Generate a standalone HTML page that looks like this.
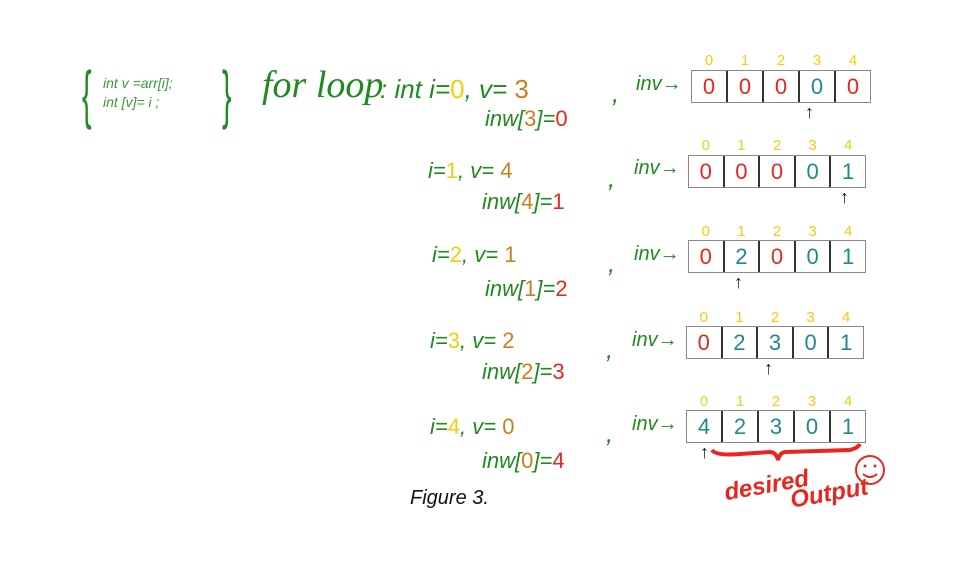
<!DOCTYPE html>
<html><head><meta charset="utf-8"><style>
body{margin:0;width:969px;height:585px;background:#fff;position:relative;overflow:hidden;font-family:"Liberation Sans",sans-serif}
.a{position:absolute;white-space:nowrap;line-height:1}
.g{color:#1f8a1f}.y{color:#f0cf10}.o{color:#c8801e}.r{color:#e8261e}.t{color:#1e8a8a}.k{color:#111}
.lab span{font-style:normal}
.arr{position:absolute;display:flex;border:1.5px solid #888;height:31px;background:#fff}
.arr div{flex:1;border-left:2px solid #333;display:flex;align-items:center;justify-content:center;font-size:22px}
.arr div:first-child{border-left:none}
.idx{position:absolute;display:flex;font-size:15px;color:#f0cf10}
.idx span{flex:1;text-align:center}
.lab{font-size:22px;font-style:italic}
</style></head><body>
<div class="a g" style="left:82px;top:62px;font-size:64px;transform:scaleX(.45);transform-origin:left">{</div>
<div class="a g" style="left:103px;top:76px;font-size:14px;font-style:italic;color:#3a9a3a">int v =arr[i];</div>
<div class="a g" style="left:103px;top:95px;font-size:14px;font-style:italic;color:#3a9a3a">int [v]= i ;</div>
<div class="a g" style="left:222px;top:62px;font-size:64px;transform:scaleX(.45);transform-origin:left">}</div>
<div class="a g" style="left:262px;top:66px;font-size:38px;font-style:italic;font-family:'Liberation Serif',serif">for loop</div>
<div class="a g lab" style="left:380px;top:76px;font-size:26px">: int i=<span class="y">0</span>, v= <span class="o">3</span></div>
<div class="a g lab" style="left:485px;top:108px">inw[<span class="o">3</span>]=<span class="r">0</span></div>

<div class="a g lab" style="left:428px;top:160px">i=<span class="y">1</span>, v= <span class="o">4</span></div>
<div class="a g lab" style="left:482px;top:191px">inw[<span class="o">4</span>]=<span class="r">1</span></div>
<div class="a g lab" style="left:432px;top:244px">i=<span class="y">2</span>, v= <span class="o">1</span></div>
<div class="a g lab" style="left:485px;top:278px">inw[<span class="o">1</span>]=<span class="r">2</span></div>
<div class="a g lab" style="left:430px;top:330px">i=<span class="y">3</span>, v= <span class="o">2</span></div>
<div class="a g lab" style="left:482px;top:361px">inw[<span class="o">2</span>]=<span class="r">3</span></div>
<div class="a g lab" style="left:430px;top:416px">i=<span class="y">4</span>, v= <span class="o">0</span></div>
<div class="a g lab" style="left:482px;top:450px">inw[<span class="o">0</span>]=<span class="r">4</span></div>

<div class="a g lab" style="left:612px;top:80px;font-size:26px">,</div>
<div class="a g lab" style="left:636px;top:74px;font-size:20px">inv→</div>
<div class="idx" style="left:691px;top:52px;width:180px"><span>0</span><span>1</span><span>2</span><span>3</span><span>4</span></div>
<div class="arr" style="left:691px;top:70px;width:178px"><div class="r">0</div><div class="r">0</div><div class="r">0</div><div class="t">0</div><div class="r">0</div></div>
<div class="a k" style="left:805px;top:103px;font-size:18px">↑</div>

<div class="a g lab" style="left:608px;top:165px;font-size:26px">,</div>
<div class="a g lab" style="left:634px;top:158px;font-size:20px">inv→</div>
<div class="idx" style="left:688px;top:137px;width:178px"><span>0</span><span>1</span><span>2</span><span>3</span><span>4</span></div>
<div class="arr" style="left:688px;top:155px;width:176px"><div class="r">0</div><div class="r">0</div><div class="r">0</div><div class="t">0</div><div class="t">1</div></div>
<div class="a k" style="left:840px;top:188px;font-size:18px">↑</div>

<div class="a g lab" style="left:608px;top:250px;font-size:26px">,</div>
<div class="a g lab" style="left:634px;top:244px;font-size:20px">inv→</div>
<div class="idx" style="left:688px;top:223px;width:178px"><span>0</span><span>1</span><span>2</span><span>3</span><span>4</span></div>
<div class="arr" style="left:688px;top:240px;width:176px"><div class="r">0</div><div class="t">2</div><div class="r">0</div><div class="t">0</div><div class="t">1</div></div>
<div class="a k" style="left:734px;top:273px;font-size:18px">↑</div>

<div class="a g lab" style="left:606px;top:336px;font-size:26px">,</div>
<div class="a g lab" style="left:632px;top:330px;font-size:20px">inv→</div>
<div class="idx" style="left:686px;top:309px;width:178px"><span>0</span><span>1</span><span>2</span><span>3</span><span>4</span></div>
<div class="arr" style="left:686px;top:326px;width:176px"><div class="r">0</div><div class="t">2</div><div class="t">3</div><div class="t">0</div><div class="t">1</div></div>
<div class="a k" style="left:764px;top:359px;font-size:18px">↑</div>

<div class="a g lab" style="left:606px;top:420px;font-size:26px">,</div>
<div class="a g lab" style="left:632px;top:414px;font-size:20px">inv→</div>
<div class="idx" style="left:686px;top:393px;width:180px"><span>0</span><span>1</span><span>2</span><span>3</span><span>4</span></div>
<div class="arr" style="left:686px;top:410px;width:178px"><div class="t">4</div><div class="t">2</div><div class="t">3</div><div class="t">0</div><div class="t">1</div></div>
<div class="a k" style="left:700px;top:443px;font-size:18px">↑</div>
<svg class="a" style="left:0;top:0" width="969" height="585">
<path d="M712 450 Q716 456 740 454 L770 452 Q776 452 778 460 Q780 452 786 452 L850 450 Q858 448 860 444" stroke="#e8261e" stroke-width="4" fill="none"/>
<circle cx="870" cy="470" r="14" stroke="#e8261e" stroke-width="2" fill="none"/>
<circle cx="865" cy="466" r="1.5" fill="#e8261e"/><circle cx="875" cy="466" r="1.5" fill="#e8261e"/>
<path d="M863 474 Q870 480 877 474" stroke="#e8261e" stroke-width="2" fill="none"/>
</svg>
<div class="a r" style="left:724px;top:474px;font-size:24px;font-style:italic;font-weight:bold;transform:rotate(-10deg)">desired</div>
<div class="a r" style="left:790px;top:482px;font-size:24px;font-style:italic;font-weight:bold;transform:rotate(-10deg)">Output</div>
<div class="a k" style="left:410px;top:488px;font-size:20px;font-style:italic">Figure 3.</div>
</body></html>
